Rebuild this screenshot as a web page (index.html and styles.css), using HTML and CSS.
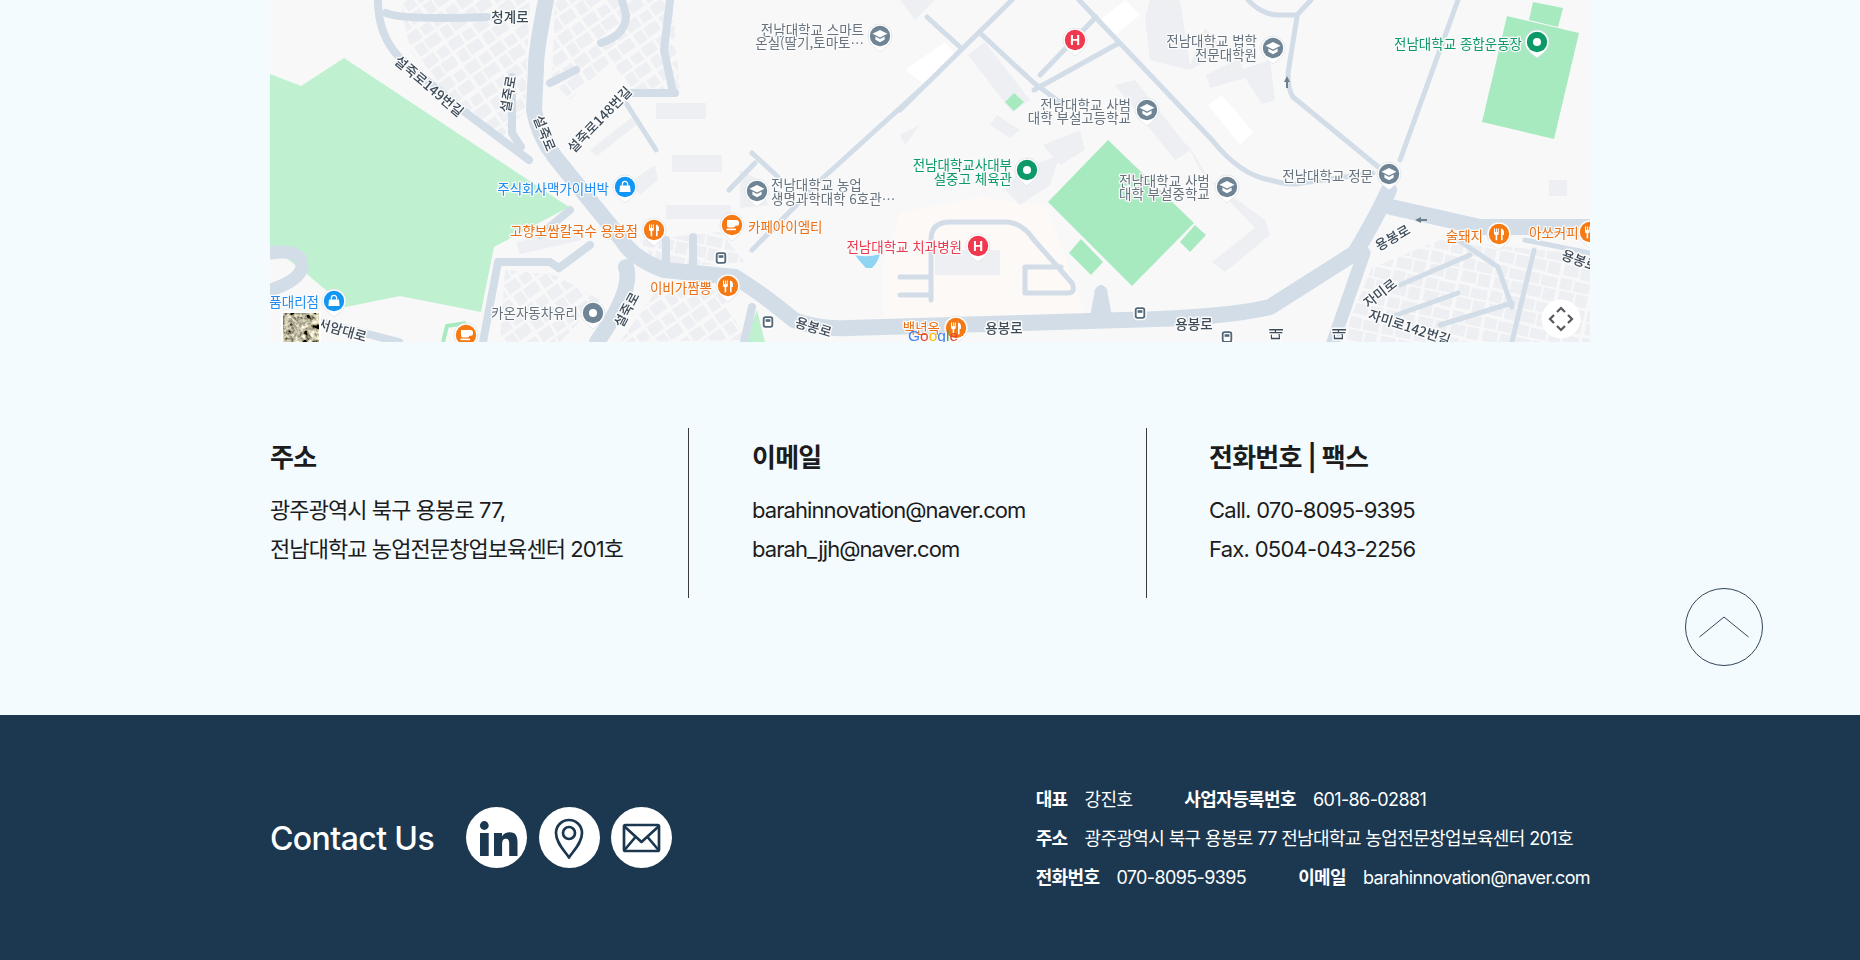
FILE: index.html
```html
<!DOCTYPE html>
<html lang="ko">
<head>
<meta charset="utf-8">
<title>Contact</title>
<link rel="stylesheet" href="styles.css">
</head>
<body>
<section class="map">
<svg class="map-svg" viewBox="270 0 1320 342" width="1320" height="342" xmlns="http://www.w3.org/2000/svg">
<defs>
  <pattern id="blocks-a" width="31" height="29" patternUnits="userSpaceOnUse" patternTransform="rotate(-35)">
    <rect class="bld" x="1" y="1" width="14" height="11"/><rect class="bld" x="18" y="2" width="11" height="10"/>
    <rect class="bld" x="2" y="15" width="10" height="12"/><rect class="bld" x="14" y="15" width="15" height="11"/>
  </pattern>
  <pattern id="blocks-b" width="33" height="27" patternUnits="userSpaceOnUse" patternTransform="rotate(12)">
    <rect class="bld" x="1" y="1" width="12" height="11"/><rect class="bld" x="15" y="2" width="16" height="10"/>
    <rect class="bld" x="2" y="14" width="15" height="11"/><rect class="bld" x="19" y="14" width="12" height="12"/>
  </pattern>
  <filter id="sat" x="0" y="0" width="100%" height="100%">
    <feTurbulence type="fractalNoise" baseFrequency="0.2" numOctaves="3" seed="7"/>
    <feColorMatrix type="matrix" values="2.200 0 0 0 -0.620  2.100 0 0 0 -0.600  1.700 0 0 0 -0.520  0 0 0 0 1"/>
  </filter>
  <g id="pin-base">
    <path class="pin-halo" d="M0 16 C-3 13 -12 8.500 -12 0 A12 12 0 0 1 12 0 C12 8.500 3 13 0 16Z"/>
    <circle r="10.200"/>
  </g>
  <g id="g-school">
    <path class="gw" d="M0 -6 L7.500 -2.200 L0 1.600 L-7.500 -2.200Z"/>
    <path class="gw" d="M-4.600 .6 L0 3 L4.600 .6 V3.800 L0 6.200 L-4.600 3.800Z"/>
  </g>
  <g id="g-food">
    <path class="gw" d="M-5 -5.500 h1 v3.600 h.9 v-3.600 h1 v3.600 h.9 v-3.600 h1 v5.200 q0 1.400 -1.600 1.600 v5 h-1.600 v-5 q-1.600 -.2 -1.600 -1.600Z"/>
    <path class="gw" d="M2 -5.500 q3 .4 3 4 v2.500 h-1.400 v5.200 h-1.600Z"/>
  </g>
  <g id="g-cafe">
    <path class="gw" d="M-5 -5 H4.200 A2.800 2.800 0 0 1 4.200 .8 H3.400 Q3 2.600 1 2.600 H-3 Q-5 2.600 -5 .6Z"/>
    <rect class="gw" x="-5.500" y="3.600" width="9.500" height="1.600"/>
  </g>
  <g id="g-shop">
    <path class="gw" d="M-5 -1.600 H5 L5.600 5 H-5.600Z"/>
    <path class="gl" d="M-2.600 -1.600 V-3 A2.600 2.600 0 0 1 2.600 -3 V-1.600"/>
  </g>
  <g id="bus">
    <rect class="bus-o" x="-6" y="-6.500" width="12" height="13" rx="3.400"/>
    <rect class="bus-i" x="-3.400" y="-4" width="6.800" height="8" rx="1"/>
    <rect class="bus-d" x="-2.400" y="-2.800" width="4.800" height="2.600"/>
  </g>
</defs>

<rect class="land" x="270" y="0" width="1320" height="342"/>
<path class="zone" d="M883 265 L900 213 L980 197 L1047 207 L1087 318 L883 325Z"/>

<!-- residential block textures -->
<path fill="url(#blocks-a)" d="M555 0 H672 L680 92 L630 92 L610 62 L570 100 L552 80Z"/>
<path fill="url(#blocks-a)" d="M400 0 H530 L525 110 L500 140 L450 100 L410 50Z"/>
<path fill="url(#blocks-b)" d="M1340 342 L1372 268 L1440 240 L1590 255 V342Z"/>
<path fill="url(#blocks-a)" d="M620 342 L660 285 L720 290 L745 340Z"/>
<path fill="url(#blocks-a)" d="M505 270 L555 275 L600 300 L560 342 H500Z"/>
<path fill="url(#blocks-b)" d="M640 240 L720 232 L745 262 L660 268Z"/>

<!-- buildings -->
<g class="bldg">
  <rect x="656" y="103" width="50" height="16"/><rect x="672" y="155" width="50" height="17"/>
  <rect x="666" y="205" width="65" height="14"/>
  <polygon points="590,150 635,115 640,122 597,156"/>
  <polygon points="630,182 655,165 658,180 640,195"/>
  <polygon points="516,243 565,226 582,240 520,254"/>
  <polygon points="740,170 760,180 768,205 740,208"/>
  <polygon points="900,135 920,125 905,145"/>
  <polygon points="968,55 985,42 1030,100 1012,112"/>
  <polygon points="997,115 1020,130 1010,138 990,125"/>
  <polygon points="1115,85 1135,80 1190,150 1175,160"/>
  <polygon points="1043,145 1080,130 1085,150 1060,165"/>
  <polygon points="1005,190 1020,170 1060,155 1050,185 1020,205"/>
  <polygon points="1185,140 1210,180 1265,220 1270,235 1225,272 1212,262 1255,228 1200,170"/>
  <polygon points="1145,18 1150,0 1180,0 1190,65 1205,28 1225,50 1190,70 1150,60"/>
  <polygon points="1206,75 1240,58 1245,78 1210,88"/>
  <polygon points="1240,70 1270,60 1275,100 1262,104"/>
  <rect x="935" y="250" width="65" height="25"/>
  <rect x="1549" y="180" width="18" height="16"/>
  <polygon points="900,0 935,0 915,20"/>
</g>

<!-- green areas -->
<g class="park">
  <polygon points="270,74 301,86 344,58 569,207 494,247 481,312 400,296 346,307 302,270 270,246"/>
  <polygon points="757,310 765,342 744,342"/>
  <path class="park-line" d="M443 342 L447 326 L466 323"/>
</g>
<g class="field">
  <polygon points="1108,140 1194,223 1132,286 1048,202"/>
  <polygon points="1081,239 1103,262 1091,275 1069,253"/>
  <polygon points="1195,225 1206,235 1190,252 1180,242"/>
  <polygon points="1014,93 1024,102 1014,111 1005,102"/>
  <polygon points="1507,16 1579,33 1554,139 1482,122"/>
  <polygon points="1533,2 1563,8 1558,27 1529,20"/>
</g>

<!-- parking stripes -->
<polygon class="stripe" points="905,70 945,42 956,55 925,85"/>
<polygon class="stripe" points="1208,105 1222,95 1253,132 1240,145"/>
<polygon class="stripe" points="1100,20 1125,0 1140,15 1115,35"/>

<!-- pond -->
<path class="pond" d="M855 255 Q868 258 880 254 Q878 262 872 268 L866 268 Q860 262 855 255Z"/>

<!-- roads -->
<g class="r r4">
  <path d="M920 90 L824 177 L752 250"/>
  <path d="M1012 0 L900 110"/>
  <path d="M927 17 L960 47"/>
  <path d="M980 33 L1034 83 L1061 103"/>
  <path d="M1119 43 L1034 90 M1096 17 L1040 75"/>
  <path d="M1079 0 L1212 140 Q1240 175 1270 180 Q1290 186 1302 183 L1373 173"/>
  <path d="M1297 17 L1288 73 Q1288 90 1293 97 L1382 170"/>
  <path d="M1248 0 Q1262 15 1279 15 L1297 15 L1311 0"/>
  <path d="M1400 160 L1458 0"/>
  <path d="M626 103 L656 150"/>
  <path d="M752 153 L778 177 M755 163 L729 190"/>
  <path d="M900 277 H931 M900 295 H931 M931 300 V240 Q931 222 950 222 H1005 Q1022 222 1034 240 L1072 283 Q1076 293 1068 293 H1025 V267 H1061"/>
  <path d="M1458 240 L1498 267 L1512 307"/>
  <path d="M1391 317 L1458 293 M1400 285 L1470 255"/>
  <path d="M1534 250 L1512 342"/>
  <path d="M1525 240 L1590 253"/>
  <path d="M1440 325 L1512 303"/>
</g>
<g class="r r8">
  <path d="M378 0 Q378 35 399 57 L466 113 L529 160"/>
  <path d="M386 13 Q400 20 487 17"/>
  <path d="M512 77 V133 L521 147"/>
  <path d="M550 83 L576 70"/>
  <path d="M601 43 Q626 35 626 15 L622 0"/>
  <path d="M670 0 L664 50 L672 88"/>
  <path d="M630 93 H675"/>
  <path d="M498 262 L483 342 M498 262 H550 L559 268"/>
  <path d="M559 268 L590 245"/>
  <path d="M693 237 V267 M666 240 V267"/>
  <path d="M321 322 L399 342"/>
  <path d="M752 307 L744 342"/>
  <path d="M570 210 L540 235"/>
</g>
<g class="r r14">
  <path d="M271 253 Q302 248 302 267 Q300 280 271 290"/>
  <path d="M1364 253 L1333 342"/>
  <path d="M1101 300 V292"/>
</g>
<g class="r r18">
  <path d="M546 0 Q536 50 536 67 L534 110 Q538 135 555 157 L592 203 L622 240 Q632 258 664 270 L735 277 Q760 292 794 320 Q820 330 849 328 L1123 320 Q1225 318 1270 307 L1355 253 Q1375 220 1389 190"/>
  <path d="M626 267 Q634 290 597 342"/>
  <path d="M1391 207 L1480 227 H1590"/>
</g>
<path class="r-fill" d="M1090 320 Q1094 284 1101 285 Q1108 284 1112 320Z"/>

<!-- arrows -->
<path class="arrow" d="M1287 76 L1290 82 H1288 V88 H1286 V82 H1284Z"/>
<path class="arrow" d="M1415 220 L1421 217 V219 H1427 V221 H1421 V223Z"/>

<!-- road labels -->
<g class="lbl rd">
  <text x="510" y="22" text-anchor="middle">청계로</text>
  <text transform="translate(426 90) rotate(40)" text-anchor="middle">설죽로149번길</text>
  <text transform="translate(513 95) rotate(-80)" text-anchor="middle">설죽로</text>
  <text transform="translate(540 135) rotate(68)" text-anchor="middle">설죽로</text>
  <text transform="translate(603 123) rotate(-46)" text-anchor="middle">설죽로148번길</text>
  <text transform="translate(341 335) rotate(16)" text-anchor="middle">서암대로</text>
  <text transform="translate(631 312) rotate(-62)" text-anchor="middle">설죽로</text>
  <text transform="translate(812 332) rotate(17)" text-anchor="middle">용봉로</text>
  <text x="1004" y="333" text-anchor="middle">용봉로</text>
  <text x="1194" y="329" text-anchor="middle">용봉로</text>
  <text transform="translate(1395 242) rotate(-30)" text-anchor="middle">용봉로</text>
  <text transform="translate(1578 265) rotate(20)" text-anchor="middle">용봉로</text>
  <text transform="translate(1383 297) rotate(-38)" text-anchor="middle">자미로</text>
  <text transform="translate(1408 332) rotate(18)" text-anchor="middle">자미로142번길</text>
  <text transform="translate(1281 334) rotate(-90)" text-anchor="middle">대</text>
  <text transform="translate(1344 334) rotate(-90)" text-anchor="middle">대</text>
</g>

<!-- place labels -->
<g class="lbl gy">
  <text x="864" y="35" text-anchor="end">전남대학교 스마트</text>
  <text x="864" y="48" text-anchor="end">온실(딸기,토마토…</text>
  <text x="771" y="190">전남대학교 농업</text>
  <text x="771" y="204">생명과학대학 6호관…</text>
  <text x="578" y="318" text-anchor="end">카온자동차유리</text>
  <text x="1257" y="46" text-anchor="end">전남대학교 법학</text>
  <text x="1257" y="60" text-anchor="end">전문대학원</text>
  <text x="1131" y="110" text-anchor="end">전남대학교 사범</text>
  <text x="1131" y="123" text-anchor="end">대학 부설고등학교</text>
  <text x="1119" y="186">전남대학교 사범</text>
  <text x="1119" y="199">대학 부설중학교</text>
  <text x="1373" y="181" text-anchor="end">전남대학교 정문</text>
</g>
<g class="lbl bl">
  <text x="609" y="194" text-anchor="end">주식회사맥가이버박</text>
  <text x="319" y="307" text-anchor="end">품대리점</text>
</g>
<g class="lbl or">
  <text x="638" y="236" text-anchor="end">고향보쌈칼국수 용봉점</text>
  <text x="748" y="232">카페아이엠티</text>
  <text x="712" y="293" text-anchor="end">이비가짬뽕</text>
  <text x="940" y="333" text-anchor="end">백년옥</text>
  <text x="1483" y="241" text-anchor="end">술돼지</text>
  <text x="1529" y="238">아쏘커피</text>
</g>
<g class="lbl gr">
  <text x="1012" y="170" text-anchor="end">전남대학교사대부</text>
  <text x="1012" y="184" text-anchor="end">설중고 체육관</text>
  <text x="1522" y="49" text-anchor="end">전남대학교 종합운동장</text>
</g>
<g class="lbl re">
  <text x="962" y="252" text-anchor="end">전남대학교 치과병원</text>
</g>

<!-- school pins -->
<g class="p-school">
  <g transform="translate(880 36)"><use href="#pin-base"/><use href="#g-school"/></g>
  <g transform="translate(757 191)"><use href="#pin-base"/><use href="#g-school"/></g>
  <g transform="translate(1273 48)"><use href="#pin-base"/><use href="#g-school"/></g>
  <g transform="translate(1147 110)"><use href="#pin-base"/><use href="#g-school"/></g>
  <g transform="translate(1227 187)"><use href="#pin-base"/><use href="#g-school"/></g>
  <g transform="translate(1389 174)"><use href="#pin-base"/><use href="#g-school"/></g>
</g>
<g class="p-food">
  <g transform="translate(654 230)"><use href="#pin-base"/><use href="#g-food"/></g>
  <g transform="translate(728 286)"><use href="#pin-base"/><use href="#g-food"/></g>
  <g transform="translate(956 328)"><use href="#pin-base"/><use href="#g-food"/></g>
  <g transform="translate(1499 234)"><use href="#pin-base"/><use href="#g-food"/></g>
  <g transform="translate(1590 232)"><use href="#pin-base"/><use href="#g-food"/></g>
  <g transform="translate(732 225)"><use href="#pin-base"/><use href="#g-cafe"/></g>
  <g transform="translate(466 335)"><use href="#pin-base"/><use href="#g-cafe"/></g>
</g>
<g class="p-shop">
  <g transform="translate(625 187)"><use href="#pin-base"/><use href="#g-shop"/></g>
  <g transform="translate(334 301)"><use href="#pin-base"/><use href="#g-shop"/></g>
</g>
<g class="p-green">
  <g transform="translate(1027 170)"><use href="#pin-base"/><circle class="gw" r="4"/></g>
  <g transform="translate(1537 42)"><use href="#pin-base"/><circle class="gw" r="4"/></g>
</g>
<g class="p-gray">
  <g transform="translate(593 313)"><use href="#pin-base"/><circle class="gw" r="4"/></g>
</g>
<g class="p-red">
  <g transform="translate(1075 40)"><use href="#pin-base"/><text class="h" y="5" text-anchor="middle">H</text></g>
  <g transform="translate(978 246)"><use href="#pin-base"/><text class="h" y="5" text-anchor="middle">H</text></g>
</g>

<use href="#bus" x="721" y="258"/>
<use href="#bus" x="768" y="322"/>
<use href="#bus" x="1140" y="313"/>
<use href="#bus" x="1227" y="337"/>

<!-- Google mark -->
<text class="goog" x="908" y="341"><tspan class="g-b">G</tspan><tspan class="g-r">o</tspan><tspan class="g-y">o</tspan><tspan class="g-b">g</tspan><tspan class="g-g">l</tspan><tspan class="g-r">e</tspan></text>

<!-- satellite thumbnail -->
<rect class="th-b" x="281" y="311" width="40" height="33" rx="2"/>
<rect x="283" y="313" width="36" height="31" filter="url(#sat)"/>

<!-- map type control -->
<circle class="ctrl" cx="1561" cy="319" r="19.500"/>
<path class="ctrl-a" d="M1557 312 L1561 308 L1565 312 M1557 326 L1561 330 L1565 326 M1554 315 L1550 319 L1554 323 M1568 315 L1572 319 L1568 323"/>
</svg>
</section>

<section class="info">
  <div class="info-grid">
    <div class="col">
      <h3 class="col-title">주소</h3>
      <p class="col-line">광주광역시 북구 용봉로 77,</p>
      <p class="col-line">전남대학교 농업전문창업보육센터 201호</p>
    </div>
    <div class="col col-mid">
      <h3 class="col-title">이메일</h3>
      <p class="col-line">barahinnovation@naver.com</p>
      <p class="col-line">barah_jjh@naver.com</p>
    </div>
    <div class="col col-last">
      <h3 class="col-title">전화번호 | 팩스</h3>
      <p class="col-line">Call. 070-8095-9395</p>
      <p class="col-line">Fax. 0504-043-2256</p>
    </div>
  </div>
  <button class="top-btn" type="button" aria-label="맨 위로">
    <svg width="50" height="22" viewBox="0 0 50 22"><path class="top-chev" d="M0.500 21 L25 1 L49.500 21"/></svg>
  </button>
</section>

<footer class="foot">
  <div class="foot-left">
    <h2 class="foot-title">Contact Us</h2>
    <div class="foot-icons">
      <a class="ico"><svg viewBox="0 0 61 61" width="61" height="61"><circle class="ico-f" cx="18.300" cy="18.500" r="4.400"/><rect class="ico-f" x="14" y="26" width="8.700" height="23"/><path class="ico-f" d="M28 26h8v3.300c1.600-2.500 4.400-4 7.800-4 6 0 7.700 4.200 7.700 9.600V49h-8.300V36.800c0-3-.7-5-3.400-5-2.800 0-3.700 2-3.700 5V49H28z"/></svg></a>
      <a class="ico"><svg viewBox="0 0 61 61" width="61" height="61"><path class="ico-s" d="M30 50.500C26 44 17 36.500 17 26A13 13 0 0 1 43 26C43 36.500 34 44 30 50.500Z"/><circle class="ico-s" cx="30" cy="26" r="6"/></svg></a>
      <a class="ico"><svg viewBox="0 0 61 61" width="61" height="61"><rect class="ico-s" x="13" y="18" width="35" height="26" rx="1.500"/><path class="ico-s" d="M13.500 19.500L30.500 35L47.500 19.500M13.500 43L24.500 30M47.500 43L36.500 30"/></svg></a>
    </div>
  </div>
  <div class="foot-right">
    <div class="foot-row"><span class="pair"><b>대표</b><span>강진호</span></span><span class="pair"><b>사업자등록번호</b><span>601-86-02881</span></span></div>
    <div class="foot-row"><span class="pair"><b>주소</b><span>광주광역시 북구 용봉로 77 전남대학교 농업전문창업보육센터 201호</span></span></div>
    <div class="foot-row"><span class="pair"><b>전화번호</b><span>070-8095-9395</span></span><span class="pair"><b>이메일</b><span>barahinnovation@naver.com</span></span></div>
  </div>
</footer>
</body>
</html>
```

FILE: styles.css
```css
* { box-sizing: border-box; }
html, body { margin: 0; padding: 0; }
body {
  width: 1860px;
  height: 960px;
  overflow: hidden;
  background: #f4fbff;
  font-family: Inter, "Noto Sans CJK KR", sans-serif;
  color: #1c1c1c;
}

/* map */
.map { width: 1320px; height: 342px; margin-left: 270px; overflow: hidden; }
.map-svg { display: block; font-family: "Noto Sans CJK KR", sans-serif; filter: blur(0.45px); }
.land { fill: #f8f8f9; }
.zone { fill: #fdf9f7; }
.bld, .bldg { fill: #edeff3; }
.park polygon { fill: #bff1d1; }
.park-line { fill: none; stroke: #a8eabf; stroke-width: 4; }
.field polygon { fill: #a8eac0; }
.stripe { fill: #ffffff; }
.pond { fill: #8fd4f2; }
.r path { fill: none; stroke: #d2dde7; stroke-linecap: round; stroke-linejoin: round; }
.r4 path { stroke-width: 5; }
.r8 path { stroke-width: 8; }
.r14 path { stroke-width: 13; }
.r18 path { stroke-width: 16; }
.r-fill { fill: #d2dde7; }
.arrow { fill: #6d7f8d; }

.lbl text {
  font-size: 13.500px;
  paint-order: stroke;
  stroke: #fbfbfb;
  stroke-width: 2.500px;
  stroke-linejoin: round;
}
.rd text { fill: #3d4b59; font-weight: 500; stroke-width: 3px; }
.gy text { fill: #66737f; }
.bl text { fill: #1f8cf0; }
.or text { fill: #ea6f12; }
.gr text { fill: #0d9a68; }
.re text { fill: #ea3a50; }

.pin-halo { fill: #ffffff; stroke: #d5dae0; stroke-width: .6; }
.p-school { fill: #6f8494; }
.p-food { fill: #f57a14; }
.p-shop { fill: #1296f5; }
.p-green { fill: #0d9a68; }
.p-gray { fill: #6f8494; }
.p-red { fill: #f0384f; }
.gw { fill: #ffffff; }
.gl { fill: none; stroke: #ffffff; stroke-width: 1.300; }
.h { fill: #ffffff; font-size: 14px; font-weight: 700; font-family: "Liberation Sans", sans-serif; }
.bus-o { fill: #53687a; stroke: #ffffff; stroke-width: 1.500; }
.bus-i { fill: #ffffff; }
.bus-d { fill: #53687a; }

.goog { font-family: "Liberation Sans", sans-serif; font-size: 15.500px; font-weight: 400; }
.g-b { fill: #4285f4; }
.g-r { fill: #ea4335; }
.g-y { fill: #fbbc05; }
.g-g { fill: #34a853; }

.th-b { fill: #ffffff; }

.ctrl { fill: #ffffff; }
.ctrl-a { fill: none; stroke: #55595e; stroke-width: 2.200; }

/* info columns */
.info {
  position: relative;
  height: 373px;
  padding: 86px 0 0 270px;
}
.info-grid {
  display: grid;
  grid-template-columns: 418px 458px 444px;
  width: 1320px;
  height: 170px;
}
.col { padding-top: 12px; }
.col-mid { padding-left: 63px; border-left: 1px solid #3c3c3c; }
.col-last { padding-left: 62px; border-left: 1px solid #3c3c3c; }
.col-title {
  margin: 0 0 15px;
  font-size: 26px;
  line-height: 36px;
  font-weight: 600;
  letter-spacing: -0.75px;
}
.col-line {
  margin: 0;
  font-size: 22px;
  line-height: 39px;
  font-weight: 400;
  letter-spacing: -0.92px;
}
.col-last .col-line { letter-spacing: -0.74px; }
.top-btn {
  position: absolute;
  left: 1685px;
  top: 246px;
  width: 78px;
  height: 78px;
  padding: 0;
  display: flex;
  align-items: center;
  justify-content: center;
  background: transparent;
  border: 1px solid #2f4558;
  border-radius: 50%;
}
.top-chev { fill: none; stroke: #2f4558; stroke-width: 1; }

/* footer */
.foot {
  height: 245px;
  padding: 0 270px;
  background: #1c3850;
  color: #ffffff;
  display: flex;
  align-items: center;
  justify-content: space-between;
}
.foot-left { display: flex; align-items: center; gap: 32px; }
.foot-title {
  margin: 2px 0 0;
  font-size: 32px;
  line-height: 40px;
  font-weight: 500;
  letter-spacing: -0.6px;
}
.foot-icons { display: flex; gap: 11.500px; }
.ico {
  width: 61px;
  height: 61px;
  border-radius: 50%;
  background: #ffffff;
  display: block;
}
.ico svg { display: block; }
.ico-f { fill: #1c3850; }
.ico-s { fill: none; stroke: #1c3850; stroke-width: 2.700; stroke-linejoin: round; }
.foot-right { display: flex; flex-direction: column; padding-top: 2px; }
.foot-row {
  display: flex;
  gap: 52px;
  font-size: 18px;
  line-height: 39px;
  letter-spacing: -0.62px;
}
.pair { display: flex; gap: 17px; }
.pair b { font-weight: 700; }
.pair span { font-weight: 400; }
```
